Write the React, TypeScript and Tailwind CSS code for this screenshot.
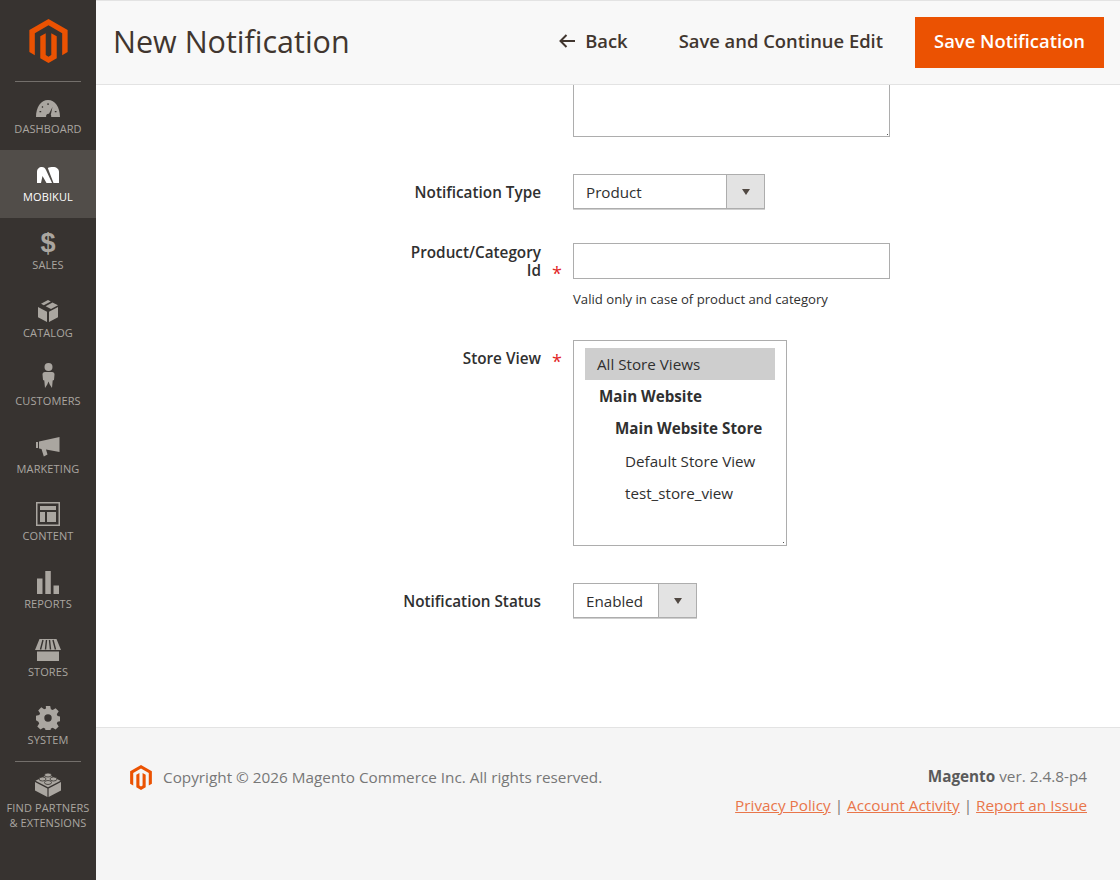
const ICON = "#aaa6a0";

function MagentoLogo({ className }: { className?: string }) {
  return (
    <svg viewBox="0 0 40 46" className={className} aria-hidden="true">
      <path
        fill="#eb5202"
        d="M20 0 40 11.5V34.5L34.3 37.8V14.8L20 6.6 5.700 14.8V37.8L0 34.5V11.5ZM20 46 11.4 41V18.1L17.1 14.8V37.7L20 39.4 22.9 37.7V14.8L28.6 18.1V41Z"
      />
    </svg>
  );
}

const icons: Record<string, React.ReactNode> = {
  dashboard: (
    <svg viewBox="0 0 24 17" className="mt-[4px] h-[17px] w-[24px]" fill={ICON}>
      <path d="M0 17C0 7 5 0 12 0s12 7 12 17H15.200c.2-.9 0-1.700-.4-2.200L16.500 7 13 13.800c-1.400-.4-3.200.7-2.900 3.200Z" />
      <path fill="#373330" d="M3.500 11h1.700v1.300H3.500zM6.400 6l1 .9-.9 1-1-.9zM11.400 3.200h1.300V5h-1.300zM18.800 11h1.700v1.300h-1.700z" />
    </svg>
  ),
  mobikul: (
    <svg viewBox="0 0 22 16" className="h-[16px] w-[22px]" fill="#fff">
      <path d="M0 16V5C0 2 2 0 5 0c2 0 3 1 4 3l6 13H9.500L5.500 9 4 16Z" />
      <path d="M10.800 1C12 .3 14 0 16 0c3.500 0 6 2 6 5v11h-5.500Z" />
    </svg>
  ),
  sales: (
    <div className="font-['Liberation_Sans',sans-serif] text-[27px] font-bold leading-[26px] text-[#aaa6a0]">$</div>
  ),
  catalog: (
    <svg viewBox="0 0 20 22" className="h-[22px] w-[20px]" fill={ICON}>
      <path d="M10 0 12.800 1.500 5.800 5.300 3 3.800ZM14.500 2.400 20 5.300 13 9 7.600 6.200ZM0 7 9 11.700V22L0 17.200ZM20 7V17.200L11 22V11.700L20 7Z" />
    </svg>
  ),
  customers: (
    <svg viewBox="0 0 13 26" className="mb-[6px] h-[26px] w-[13px]" fill={ICON}>
      <circle cx="6.500" cy="4" r="4" />
      <path d="M3 9h7c1.600 0 2.500 1 2.500 2.500l-.5 5.500-1.300.4L10 25l-2.300-3.500-1.200-3-1.200 3L3 25l-.7-7.600L1 17 .5 11.500C.5 10 1.400 9 3 9Z" />
    </svg>
  ),
  marketing: (
    <svg viewBox="0 0 24 20" className="h-[20px] w-[24px]" fill={ICON}>
      <path d="M0 5h2v6H0zM3 4.500 23.500 0v15L10 12.600l1.500 5-3.700 1.800L5.500 12l-2.500-.5Z" />
    </svg>
  ),
  content: (
    <svg viewBox="0 0 24 24" className="h-[24px] w-[24px]" fill={ICON}>
      <path fillRule="evenodd" d="M0 0h24v24H0Zm1.500 1.500v21h21v-21Z" />
      <path d="M4 4h16v4H4zM4 10h5v10H4zM11 10h9v10h-9z" />
    </svg>
  ),
  reports: (
    <svg viewBox="0 0 22 23" className="h-[23px] w-[22px]" fill={ICON}>
      <path d="M0 7.500h5.500V23H0zM8.300 0h5.500v23H8.300zM16.500 14.500H22V23h-5.500z" />
    </svg>
  ),
  stores: (
    <svg viewBox="0 0 26 22" className="h-[22px] w-[26px]" fill={ICON}>
      <path d="M4.500 0h17L26 11H0Z" />
      <path stroke="#373330" strokeWidth="1.400" d="M8 1 5.500 10.500M11.500 1 10.500 10.500M14.500 1 15.500 10.500M18 1 20.500 10.500" />
      <path d="M2 12.500h22V22H2z" />
    </svg>
  ),
  system: (
    <svg viewBox="0 0 24 24" className="h-[24px] w-[24px]" fill={ICON}>
      <path
        fillRule="evenodd"
        d="M9.800 0h4.400l.7 3.300 1.800.8 2.900-1.900 3.100 3.100-1.900 2.900.8 1.800 3.300.7v4.400l-3.300.7-.8 1.800 1.900 2.900-3.100 3.100-2.900-1.900-1.800.8-.7 3.300H9.800l-.7-3.300-1.800-.8-2.900 1.900-3.100-3.100 1.900-2.900-.8-1.800L0 14.200V9.800l3.300-.7.8-1.800-1.900-2.900 3.100-3.100 2.900 1.900 1.800-.8ZM12 8.300a3.700 3.700 0 1 0 0 7.400 3.700 3.700 0 0 0 0-7.400Z"
      />
    </svg>
  ),
  partners: (
    <svg viewBox="0 0 26 25" className="h-[25px] w-[26px]" fill={ICON}>
      <path d="M0 10 12.400 16.500V25L0 18.500ZM26 10V18.500L13.600 25V16.500Z" />
      <path d="M13 2.500 25.500 8.800 13 15.300.5 8.800Z" />
      <ellipse cx="13" cy="3" rx="3.500" ry="2" stroke="#373330" strokeWidth=".8" />
      <ellipse cx="7.500" cy="7" rx="3.500" ry="2" stroke="#373330" strokeWidth=".8" />
      <ellipse cx="18.500" cy="7" rx="3.500" ry="2" stroke="#373330" strokeWidth=".8" />
      <ellipse cx="13" cy="10.500" rx="3.500" ry="2" stroke="#373330" strokeWidth=".8" />
    </svg>
  ),
};

const menu = [
  { id: "dashboard", label: "DASHBOARD" },
  { id: "mobikul", label: "MOBIKUL" },
  { id: "sales", label: "SALES" },
  { id: "catalog", label: "CATALOG" },
  { id: "customers", label: "CUSTOMERS" },
  { id: "marketing", label: "MARKETING" },
  { id: "content", label: "CONTENT" },
  { id: "reports", label: "REPORTS" },
  { id: "stores", label: "STORES" },
  { id: "system", label: "SYSTEM" },
];

function Sidebar() {
  return (
    <aside className="flex w-[96px] shrink-0 flex-col bg-[#373330]">
      <div className="flex h-[81px] shrink-0 justify-center pt-[19px]">
        <MagentoLogo className="h-[44px] w-[39px]" />
      </div>
      <div className="mx-[15px] h-px bg-[#736f6b]" />
      {menu.map((item) => {
        const active = item.id === "mobikul";
        return (
          <div
            key={item.id}
            className={`flex h-[67.936px] shrink-0 flex-col items-center justify-end pb-[14px] ${
              active ? "bg-[#514d49] text-white" : "text-[#aaa6a0]"
            }`}
          >
            <div className="flex h-[30px] items-center justify-center">{icons[item.id]}</div>
            <div className="text-[11px] leading-[14px] tracking-[0.1px]">{item.label}</div>
          </div>
        );
      })}
      <div className="mx-[15px] h-px bg-[#736f6b]" />
      <div className="flex flex-col items-center pt-[10px] text-[#aaa6a0]">
        {icons.partners}
        <div className="mt-[3px] text-center text-[11px] leading-[15px] tracking-[0.1px]">
          FIND PARTNERS
          <br />& EXTENSIONS
        </div>
      </div>
    </aside>
  );
}

function Caret() {
  return <div className="h-0 w-0 border-x-[4.5px] border-t-[6px] border-x-transparent border-t-[#514943]" />;
}

function FakeSelect({ value, width }: { value: string; width: string }) {
  return (
    <div className={`flex h-[35px] ${width} items-stretch border border-[#adadad] bg-white text-[15.2px] text-[#303030] shadow-[0_1px_0_#cfcfcf]`}>
      <div className="flex flex-1 items-center pl-[12px] pt-[2px]">{value}</div>
      <div className="flex w-[38px] items-center justify-center border-l border-[#adadad] bg-[#e3e3e3]">
        <Caret />
      </div>
    </div>
  );
}

function Row({ label, required, children, className }: { label: React.ReactNode; required?: boolean; children: React.ReactNode; className?: string }) {
  return (
    <div className={`flex items-start ${className ?? ""}`}>
      <div className="flex w-[477px] shrink-0 items-end">
        <div className="w-[445px] shrink-0 text-right text-[15.3px] font-semibold leading-[18px] text-[#303030]">{label}</div>
        {required ? <span className="ml-[11px] translate-y-[3px] text-[18px] leading-[18px] text-[#e22626]">*</span> : null}
      </div>
      <div>{children}</div>
    </div>
  );
}

export default function App() {
  return (
    <div className="flex h-[880px] w-[1120px] overflow-hidden bg-white font-['Open_Sans',sans-serif]">
      <Sidebar />
      <div className="flex min-w-0 flex-1 flex-col">
        <header className="flex h-[85px] shrink-0 items-center border-y border-[#e3e3e3] bg-[#f8f8f8] pl-[17px] pr-[16px]">
          <h1 className="pb-[2px] text-[30.5px] font-normal leading-none text-[#41362f]">New Notification</h1>
          <div className="ml-auto flex items-center">
            <button type="button" className="flex items-center pb-[2px] text-[18.4px] font-semibold text-[#41362f]">
              <svg width="16" height="14" viewBox="0 0 16 14" fill="none" stroke="#41362f" strokeWidth="2" aria-hidden="true">
                <path d="M16 7H2M7.500 1 1.500 7l6 6" />
              </svg>
              <span className="ml-[10px] pb-[2px]">Back</span>
            </button>
            <button type="button" className="ml-[51px] pb-[4px] text-[18.4px] font-semibold text-[#41362f]">
              Save and Continue Edit
            </button>
            <button type="button" className="ml-[32px] h-[51px] w-[189px] border border-[#eb5202] bg-[#eb5202] pb-[4px] text-[18.4px] font-semibold text-white">
              Save Notification
            </button>
          </div>
        </header>

        <main className="flex-1 overflow-hidden">
          <div className="relative ml-[477px] w-[317px]">
            <textarea className="block h-[52px] w-[317px] resize-none border border-t-0 border-[#adadad] bg-white" />
            <div className="absolute bottom-[2px] right-[2px] h-px w-px bg-[#555]" />
          </div>

          <Row label={<div className="pt-[9px]">Notification Type</div>} className="mt-[37px]">
            <FakeSelect value="Product" width="w-[192px]" />
          </Row>

          <Row
            required
            label={
              <>
                Product/Category
                <br />
                Id
              </>
            }
            className="mt-[34px]"
          >
            <input className="block h-[36px] w-[317px] border border-[#adadad] bg-white" />
            <div className="mt-[11px] text-[13.15px] leading-[18px] text-[#303030]">Valid only in case of product and category</div>
          </Row>

          <Row required label={<div className="pt-[9px]">Store View</div>} className="mt-[32px]">
            <div className="relative h-[206px] w-[214px] border border-[#adadad] bg-white pl-[11px] pr-[11px] pt-[7px] text-[15.2px] text-[#303030]">
              <div className="flex h-[32px] items-center bg-[#cecece] pl-[12px]">All Store Views</div>
              <div className="flex h-[32px] items-center pl-[14px] font-bold">Main Website</div>
              <div className="flex h-[32px] items-center pl-[30px] font-bold">Main Website Store</div>
              <div className="flex h-[33px] items-center pl-[40px] pt-[1px]">Default Store View</div>
              <div className="flex h-[32px] items-center pl-[40px]">test_store_view</div>
              <div className="absolute bottom-[2px] right-[2px] h-px w-px bg-[#555]" />
            </div>
          </Row>

          <Row label={<div className="pt-[9px]">Notification Status</div>} className="mt-[37px]">
            <FakeSelect value="Enabled" width="w-[124px]" />
          </Row>
        </main>

        <footer className="flex h-[153px] shrink-0 items-start justify-between border-t border-[#e3e3e3] bg-[#f5f5f5] pl-[34px] pr-[33px] pt-[36px]">
          <div className="flex items-center">
            <MagentoLogo className="h-[25px] w-[22px] translate-y-[1px]" />
            <span className="ml-[11px] text-[15.3px] leading-[24px] text-[#777777]">Copyright © 2026 Magento Commerce Inc. All rights reserved.</span>
          </div>
          <div className="text-right text-[15.3px] leading-[24px] text-[#777777]">
            <div>
              <b className="font-bold text-[#5a5a5a]">Magento</b> ver. 2.4.8-p4
            </div>
            <div className="mt-[5px] text-[#777777]">
              <a className="text-[#e9764a] underline">Privacy Policy</a> | <a className="text-[#e9764a] underline">Account Activity</a> |{" "}
              <a className="text-[#e9764a] underline">Report an Issue</a>
            </div>
          </div>
        </footer>
      </div>
    </div>
  );
}
